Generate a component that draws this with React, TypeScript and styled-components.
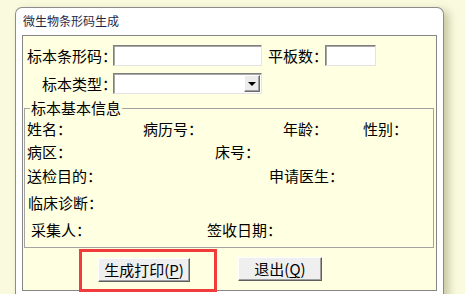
import styled, { createGlobalStyle } from "styled-components";

const GlobalStyle = createGlobalStyle`
  html, body {
    margin: 0;
    padding: 0;
    background: #fafadf;
    overflow: hidden;
  }
  body {
    font-family: "Noto Sans CJK SC", "Liberation Sans", sans-serif;
    color: #000;
  }
`;

const App = () => {
  return (
    <Screen>
      <GlobalStyle />
      <Dialog>
        <Title>微生物条形码生成</Title>
        <Panel>
          <TopForm>
            <FormRow>
              <FormLabel $w={86}>标本条形码：</FormLabel>
              <TextBox $w={149} />
              <FormLabel $w={57} $ml={6}>
                平板数：
              </FormLabel>
              <TextBox $w={51} />
            </FormRow>
            <FormRow $mt={7}>
              <FormLabel $w={86} $pl={15}>
                标本类型：
              </FormLabel>
              <ComboBox>
                <DropButton>
                  <Arrow />
                </DropButton>
              </ComboBox>
            </FormRow>
          </TopForm>

          <GroupBox>
            <Legend>标本基本信息</Legend>
            <InfoRow $mt={5}>
              <Field $w={116}>姓名：</Field>
              <Field $w={140}>病历号：</Field>
              <Field $w={80}>年龄：</Field>
              <Field>性别：</Field>
            </InfoRow>
            <InfoRow $mt={7}>
              <Field $w={188}>病区：</Field>
              <Field>床号：</Field>
            </InfoRow>
            <InfoRow $mt={8}>
              <Field $w={242}>送检目的：</Field>
              <Field>申请医生：</Field>
            </InfoRow>
            <InfoRow $mt={11} $pl={1}>
              <Field>临床诊断：</Field>
            </InfoRow>
            <InfoRow $mt={11} $pl={4}>
              <Field $w={176}>采集人：</Field>
              <Field>签收日期：</Field>
            </InfoRow>
          </GroupBox>

          <ButtonBar>
            <Highlight>
              <PushButton $w={92}>
                生成打印(<u>P</u>)
              </PushButton>
            </Highlight>
            <PushButton $w={84} $ml={21} $mt={8}>
              退出(<u>Q</u>)
            </PushButton>
          </ButtonBar>
        </Panel>
      </Dialog>
    </Screen>
  );
};

const Screen = styled.div`
  width: 465px;
  height: 294px;
  box-sizing: border-box;
  padding: 7px 0 0 15px;
  overflow: hidden;
`;
const Dialog = styled.div`
  width: 429px;
  height: 292px;
  box-sizing: border-box;
  background: #fff;
  border: 1px solid #8c8c8c;
  border-bottom: none;
  border-radius: 7px 7px 0 0;
  box-shadow: 5px 3px 9px rgba(140, 140, 90, 0.45);
  padding-left: 6px;
`;
const Title = styled.div`
  height: 27px;
  line-height: 26px;
  padding-left: 1px;
  font-size: 12px;
  color: #1f2a44;
`;
const Panel = styled.div`
  width: 415px;
  height: 256px;
  box-sizing: border-box;
  border: 1px solid #858585;
  background: #ffffe1;
`;
const TopForm = styled.div`
  padding: 9px 0 0 4px;
`;
const FormRow = styled.div<{ $mt?: number }>`
  display: flex;
  align-items: center;
  height: 21px;
  margin-top: ${(p) => p.$mt ?? 0}px;
`;
const FormLabel = styled.span<{ $w: number; $ml?: number; $pl?: number }>`
  flex: none;
  width: ${(p) => p.$w}px;
  margin-left: ${(p) => p.$ml ?? 0}px;
  padding-left: ${(p) => p.$pl ?? 0}px;
  box-sizing: border-box;
  white-space: nowrap;
  font-size: 15px;
  line-height: 16px;
`;
const TextBox = styled.div<{ $w: number }>`
  position: relative;
  flex: none;
  width: ${(p) => p.$w}px;
  height: 21px;
  box-sizing: border-box;
  background: #fff;
  border: 1px solid;
  border-color: #7f7f7f #e3e3e3 #e3e3e3 #7f7f7f;
  box-shadow: inset 1px 1px 0 #a6a6a6;
`;
const ComboBox = styled(TextBox).attrs({ $w: 149 })`
  display: flex;
  justify-content: flex-end;
  align-items: center;
  padding: 1px;
`;
const DropButton = styled.div`
  width: 16px;
  height: 17px;
  box-sizing: border-box;
  display: flex;
  align-items: center;
  justify-content: center;
  background: #ececec;
  border: 1px solid;
  border-color: #fff #6a6a6a #6a6a6a #fff;
  box-shadow: inset -1px -1px 0 #a0a0a0;
`;
const Arrow = styled.div`
  width: 0;
  height: 0;
  border-left: 4px solid transparent;
  border-right: 4px solid transparent;
  border-top: 4px solid #000;
`;
const GroupBox = styled.fieldset`
  margin: 6px 3px 0 1px;
  width: 410px;
  height: 148px;
  box-sizing: border-box;
  padding: 0 0 0 2px;
  min-width: 0;
  border: 1px solid #a3a3a3;
`;
const Legend = styled.legend`
  margin-left: 3px;
  padding: 0 1px;
  font-size: 15px;
  line-height: 16px;
`;
const InfoRow = styled.div<{ $mt: number; $pl?: number }>`
  display: flex;
  height: 16px;
  margin-top: ${(p) => p.$mt}px;
  padding-left: ${(p) => p.$pl ?? 0}px;
`;
const Field = styled.span<{ $w?: number }>`
  flex: none;
  width: ${(p) => (p.$w ? `${p.$w}px` : "auto")};
  white-space: nowrap;
  font-size: 15px;
  line-height: 16px;
`;
const ButtonBar = styled.div`
  display: flex;
  align-items: flex-start;
  margin-top: 1px;
  padding-left: 56px;
`;
const Highlight = styled.div`
  flex: none;
  width: 138px;
  height: 43px;
  box-sizing: border-box;
  border: 3px solid #f23b3b;
  padding: 5px 0 0 16px;
`;
const PushButton = styled.button<{ $w: number; $ml?: number; $mt?: number }>`
  flex: none;
  width: ${(p) => p.$w}px;
  height: 24px;
  margin: ${(p) => p.$mt ?? 0}px 0 0 ${(p) => p.$ml ?? 0}px;
  padding: 0;
  box-sizing: border-box;
  background: #efefef;
  border: 1px solid;
  border-color: #fff #5e5e5e #5e5e5e #fff;
  box-shadow: inset -1px -1px 0 #a0a0a0;
  font-family: "Noto Sans CJK SC", sans-serif;
  font-size: 15px;
  line-height: 20px;
  color: #000;
  u {
    text-decoration-thickness: 1px;
    text-underline-offset: 2px;
  }
`;

export default App;
